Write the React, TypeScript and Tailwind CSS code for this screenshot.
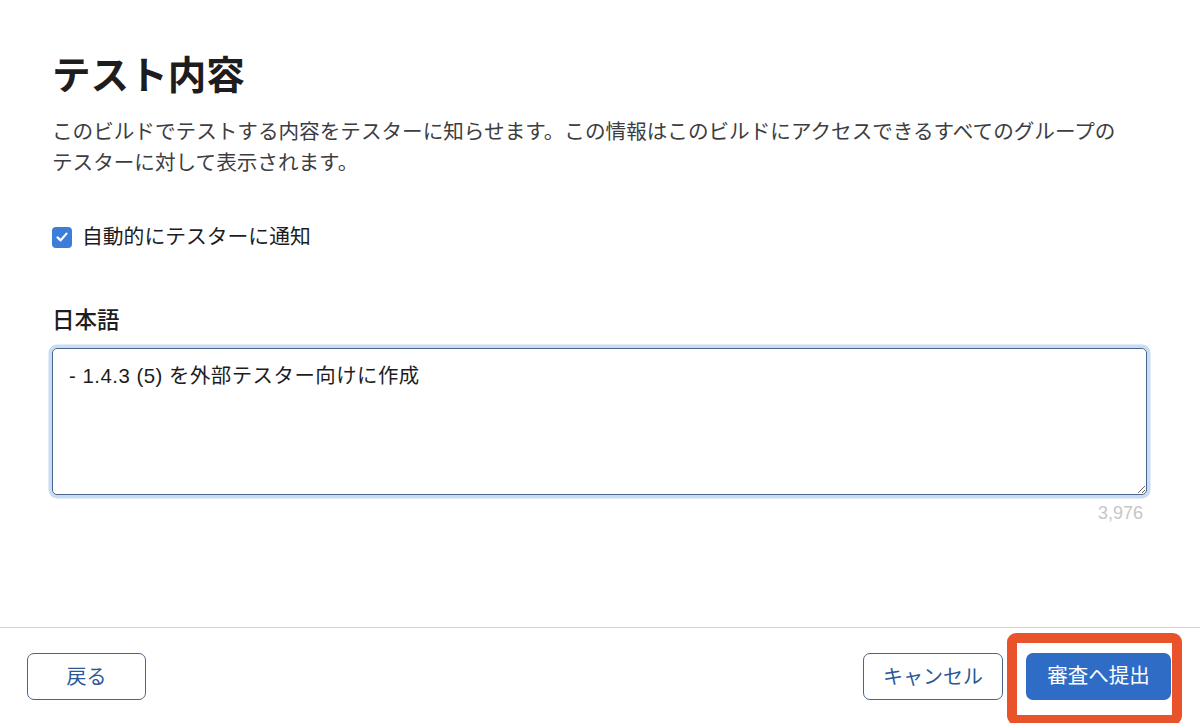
import React from "react";

const font = { fontFamily: '"Liberation Sans", "Noto Sans CJK JP", sans-serif' };

export default function App() {
  return (
    <div
      className="relative flex h-[723px] w-[1200px] flex-col overflow-hidden bg-white font-['Liberation_Sans','Noto_Sans_CJK_JP',sans-serif]"
      style={font}
    >
      <div className="flex flex-col pl-[52px] pr-[53px] pt-[53px]">
        <h1 className="text-[38.6px] font-bold leading-[46px] text-[#1d1d1f]">テスト内容</h1>
        <p className="mt-[17px] text-[20.6px] leading-[31px] text-[#3d3d3f] whitespace-nowrap">
          このビルドでテストする内容をテスターに知らせます。この情報はこのビルドにアクセスできるすべてのグループの
          <br />
          テスターに対して表示されます。
        </p>
        <label className="mt-[47px] flex h-[24px] items-center gap-[10px]">
          <span className="flex h-[21px] w-[20px] items-center justify-center rounded-[4px] bg-[#3b7dd8]">
            <svg width="14" height="14" viewBox="0 0 14 14" fill="none">
              <path d="M2.5 7.4 L5.6 10.4 L11.5 3.6" stroke="white" strokeWidth="2.2" strokeLinecap="round" strokeLinejoin="round" />
            </svg>
          </span>
          <span className="text-[20.8px] leading-[24px] text-[#1d1d1f]">自動的にテスターに通知</span>
        </label>
        <div className="mt-[58px] text-[22.5px] font-medium leading-[28px] text-[#1d1d1f]">日本語</div>
        <textarea
          className="mt-[13px] h-[147px] w-full rounded-[5px] border-[1.5px] border-[#4a6589] px-[16px] pt-[13px] text-[20.4px] leading-[28px] tracking-[0.5px] text-[#1d1d1f] outline-none ring-[3.5px] ring-[#c8dcf4]"
          style={font}
          defaultValue="- 1.4.3 (5) を外部テスター向けに作成"
        />
        <div className="mt-[7px] pr-[4px] text-right text-[18px] leading-[22px] text-[#c6c6c8]">3,976</div>
      </div>
      <div className="flex-1" />
      <div className="flex h-[96px] items-start border-t border-[#d4d4d6] pl-[27px] pr-[29px] pt-[25px]">
        <button className="h-[47px] w-[119px] rounded-[7px] border-[1.5px] border-[#4a6589] bg-white text-[20px] text-[#2c5896]">
          戻る
        </button>
        <div className="flex-1" />
        <button className="h-[47px] w-[140px] rounded-[7px] border-[1.5px] border-[#4a6589] bg-white text-[20px] text-[#2c5896]">
          キャンセル
        </button>
        <button className="ml-[23px] h-[47px] w-[145px] rounded-[7px] bg-[#2f6cc6] text-[20.5px] text-white">
          審査へ提出
        </button>
      </div>
      <div className="pointer-events-none absolute left-[1007px] top-[633px] h-[92px] w-[175px] rounded-[9px] border-[10px] border-[#e8532b]" />
    </div>
  );
}
